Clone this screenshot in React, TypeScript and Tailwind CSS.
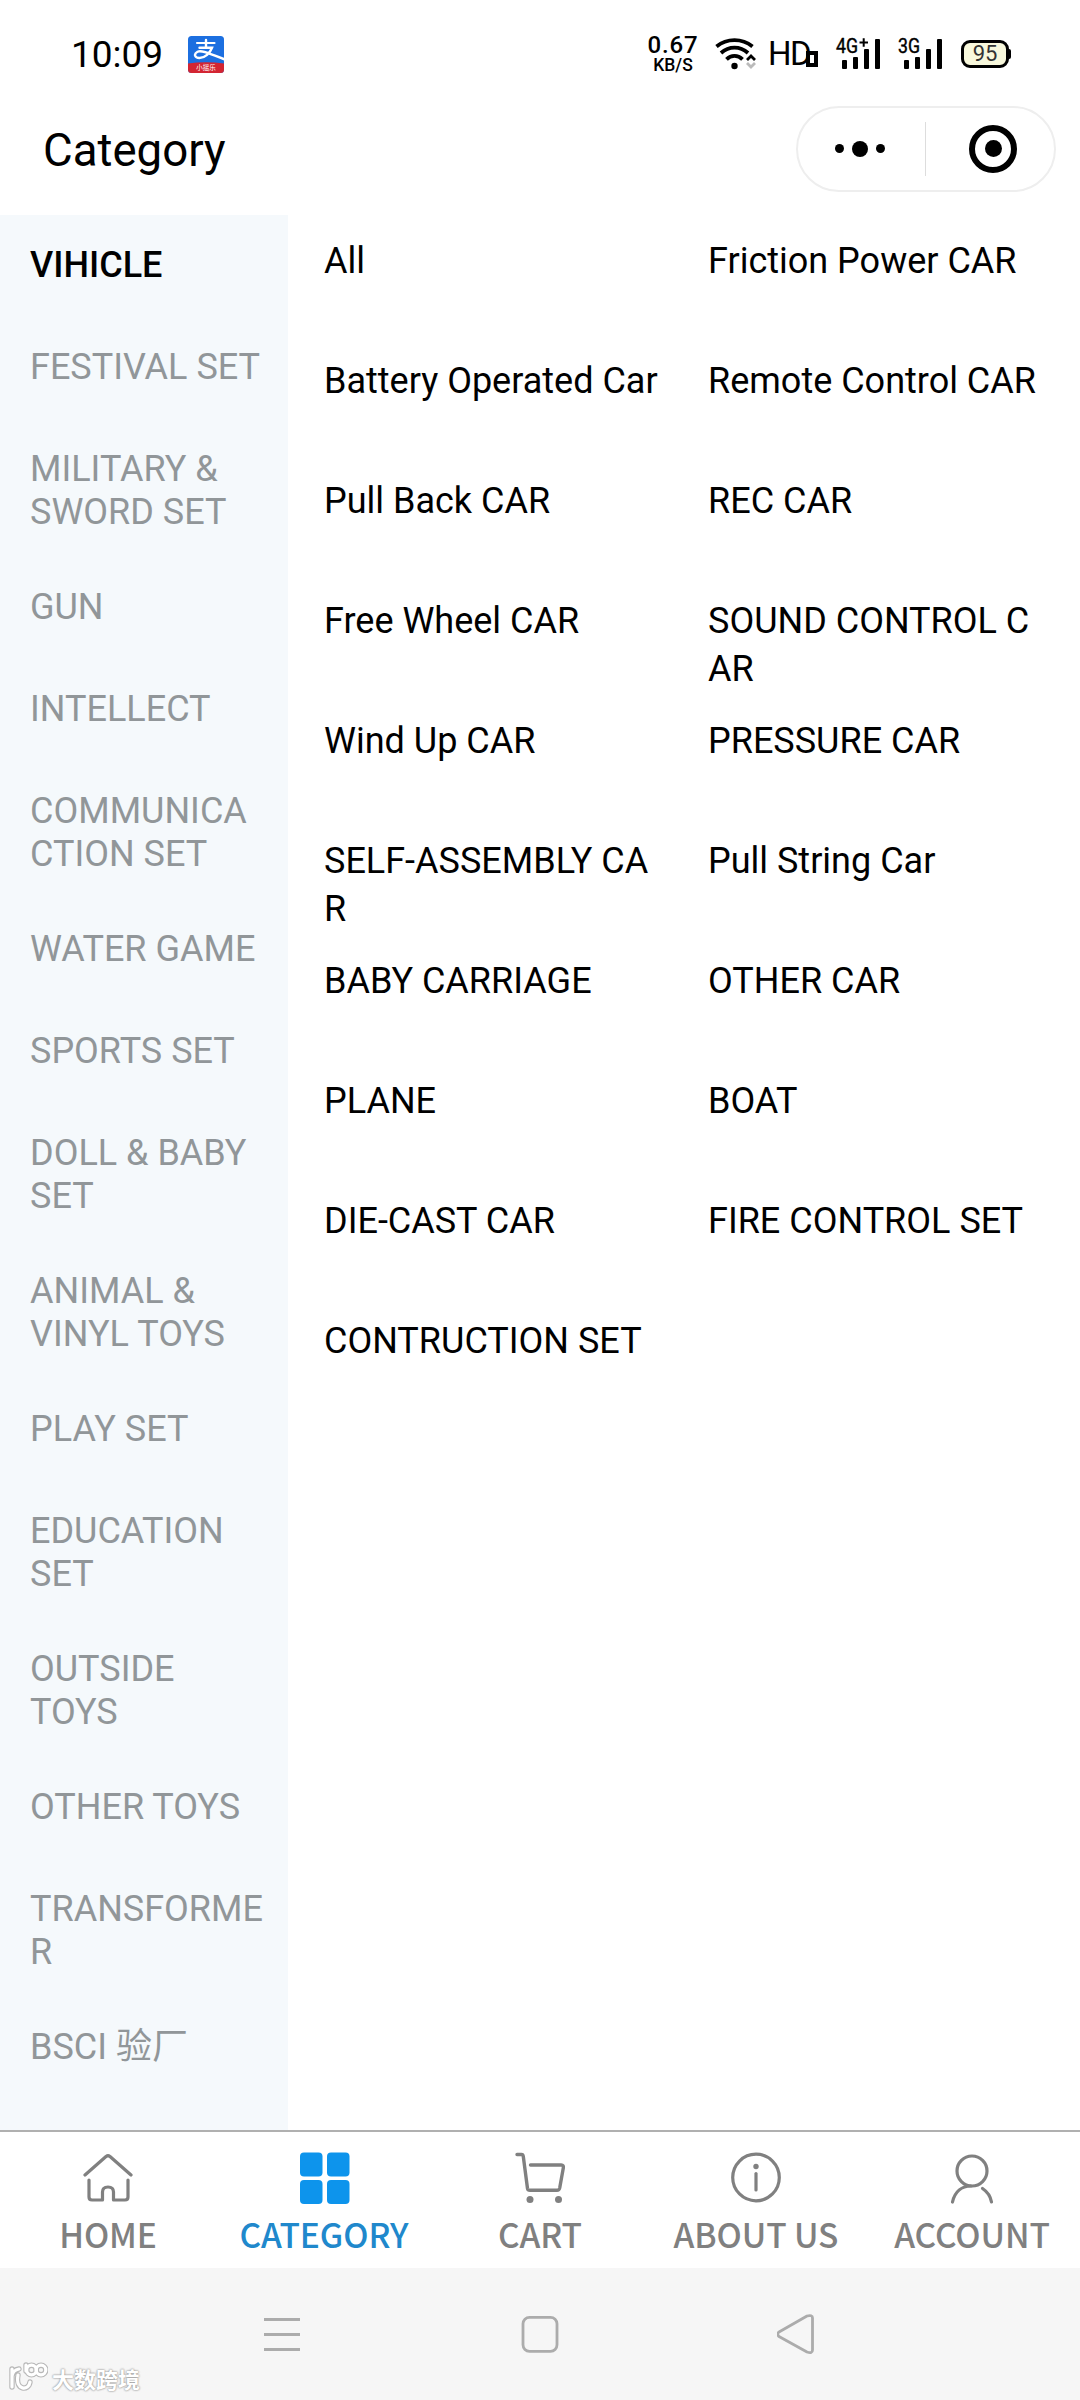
import type { ReactNode } from 'react'

const categories: string[][] = [
  ['VIHICLE'],
  ['FESTIVAL SET'],
  ['MILITARY &', 'SWORD SET'],
  ['GUN'],
  ['INTELLECT'],
  ['COMMUNICA', 'CTION SET'],
  ['WATER GAME'],
  ['SPORTS SET'],
  ['DOLL & BABY', 'SET'],
  ['ANIMAL &', 'VINYL TOYS'],
  ['PLAY SET'],
  ['EDUCATION', 'SET'],
  ['OUTSIDE', 'TOYS'],
  ['OTHER TOYS'],
  ['TRANSFORME', 'R'],
  ['BSCI 验厂'],
]

const subCategories = [
  'All', 'Friction Power CAR',
  'Battery Operated Car', 'Remote Control CAR',
  'Pull Back CAR', 'REC CAR',
  'Free Wheel CAR', 'SOUND CONTROL CAR',
  'Wind Up CAR', 'PRESSURE CAR',
  'SELF-ASSEMBLY CAR', 'Pull String Car',
  'BABY CARRIAGE', 'OTHER CAR',
  'PLANE', 'BOAT',
  'DIE-CAST CAR', 'FIRE CONTROL SET',
  'CONTRUCTION SET',
]

function AppBadge() {
  return (
    <svg width="36" height="37" viewBox="0 0 36 37">
      <clipPath id="badge"><rect width="36" height="37" rx="3.5" /></clipPath>
      <g clipPath="url(#badge)">
        <rect width="36" height="37" fill="#1c6fe0" />
        <path d="M0 27.5Q18 25 36 27.5V37H0Z" fill="#d32532" />
        <g fill="none" stroke="#fff" strokeLinecap="round">
          <path d="M9 7H26.5" strokeWidth="2.2" />
          <path d="M18 4V11.5" strokeWidth="2.4" />
          <path d="M11.5 11.8H24C22 17 17 22 11.5 22C6.5 22 5.5 18 9.5 15.8C14 13.5 23 18.5 37 23.5" strokeWidth="2.4" />
        </g>
        <text x="18" y="34.4" textAnchor="middle" fontSize="6.5" fill="#fff" fontFamily="Noto Sans CJK SC, sans-serif">小摇乐</text>
      </g>
    </svg>
  )
}

function WifiIcon() {
  return (
    <svg width="42" height="34" viewBox="0 0 42 34" fill="none" stroke="#000" strokeWidth="3.8">
      <path d="M1.5 9.5C12 1 27 1 37.5 9.5" />
      <path d="M6 16C14 8.8 25 8.8 33 16" />
      <path d="M11.5 22.3C16 17.8 23 17.8 27.5 22.3" />
      <circle cx="19.5" cy="29" r="3.2" fill="#000" stroke="none" />
      <path d="M32 23L36 19L40 23" strokeWidth="2.8" />
      <path d="M32 26L36 30L40 26" stroke="#bbb" strokeWidth="2.8" />
    </svg>
  )
}

function SignalIcon({ label, plus }: { label: string; plus?: boolean }) {
  return (
    <svg width="46" height="34" viewBox="0 0 46 34" overflow="visible">
      <g fill="#000">
        <rect x="7" y="23" width="5" height="9" rx="1" />
        <rect x="18" y="20" width="5" height="12" rx="1" />
        <rect x="29" y="12" width="5" height="20" rx="1" />
        <rect x="40" y="2" width="5" height="30" rx="1" />
      </g>
      {plus && <path d="M24.5 5.5H33M28.7 1.3V9.8" stroke="#000" strokeWidth="2" />}
      <text x="1" y="16.4" fontSize="19.5" fill="#000" stroke="#000" strokeWidth="0.4" textLength="22" lengthAdjust="spacingAndGlyphs" fontFamily="Roboto, sans-serif">{label}</text>
    </svg>
  )
}

function HomeIcon() {
  return (
    <svg width="50" height="54" viewBox="0 0 50 54" fill="none" stroke="#808080" strokeWidth="3.2" strokeLinecap="round" strokeLinejoin="round">
      <path d="M2 24L23 5.5Q25 4 27 5.5L48 24" />
      <path d="M6 29V46Q6 49 9 49H19.5V41Q19.5 36 25 36Q30.5 36 30.5 41V49H42Q45 49 45 46V29" />
    </svg>
  )
}

function CategoryIcon() {
  return (
    <svg className="ml-[2px]" width="50" height="54" viewBox="0 0 50 54" fill="#0d94ec">
      <rect x="0" y="1.5" width="22.5" height="24" rx="4" />
      <rect x="27" y="1.5" width="22.5" height="24" rx="4" />
      <rect x="0" y="29" width="22.5" height="24" rx="4" />
      <rect x="27" y="29" width="22.5" height="24" rx="4" />
    </svg>
  )
}

function CartIcon() {
  return (
    <svg width="50" height="54" viewBox="0 0 50 54" fill="none" stroke="#808080" strokeWidth="3.4" strokeLinecap="round" strokeLinejoin="round">
      <path d="M2 3.5H6.5Q8 3.5 8.300 5.5L12.5 37.5Q12.8 39.3 15 39.3H42Q44.2 39.3 44.7 37L48.3 17Q48.8 14 46.3 14H15.5" />
      <circle cx="15" cy="48.5" r="3.5" fill="#808080" stroke="none" />
      <circle cx="43.5" cy="48.5" r="3.5" fill="#808080" stroke="none" />
    </svg>
  )
}

function InfoIcon() {
  return (
    <svg width="50" height="54" viewBox="0 0 50 54" fill="none" stroke="#808080" strokeWidth="3.2" strokeLinecap="round">
      <circle cx="25" cy="26.5" r="23.3" />
      <circle cx="25" cy="15.5" r="2.7" fill="#808080" stroke="none" />
      <path d="M25 22.5V39" />
    </svg>
  )
}

function AccountIcon() {
  return (
    <svg width="50" height="54" viewBox="0 0 50 54" fill="none" stroke="#808080" strokeWidth="3.2" strokeLinecap="round">
      <circle cx="25" cy="20" r="15" />
      <path d="M5.5 51C8 40.5 15 35 24 35" />
      <path d="M35.5 37.5C40 40.5 43.5 45 44.5 51" />
    </svg>
  )
}

const tabs: { label: string; icon: ReactNode; active?: boolean }[] = [
  { label: 'HOME', icon: <HomeIcon /> },
  { label: 'CATEGORY', icon: <CategoryIcon />, active: true },
  { label: 'CART', icon: <CartIcon /> },
  { label: 'ABOUT US', icon: <InfoIcon /> },
  { label: 'ACCOUNT', icon: <AccountIcon /> },
]

export default function App() {
  return (
    <div className="flex h-[2400px] w-[1080px] flex-col overflow-hidden bg-white font-['Roboto','Noto_Sans_CJK_SC',sans-serif] text-black">
      {/* Status bar */}
      <header className="flex h-[102px] shrink-0 items-center pt-[6px] pr-[69px] pl-[71px]">
        <span className="w-[117px] text-[37px] leading-none">10:09</span>
        <AppBadge />
        <div className="ml-auto flex items-center">
          <div className="flex w-[50px] flex-col items-center font-medium">
            <span className="text-[24px] leading-[22px] tracking-[0.8px]">0.67</span>
            <span className="text-[17.5px] leading-[18px]">KB/S</span>
          </div>
          <div className="ml-[17px]"><WifiIcon /></div>
          <div className="ml-[11px] flex items-end">
            <span className="w-[38px] text-[33px] leading-[30px] tracking-[-1.5px]">HD</span>
            <span className="mb-[2px] h-[16px] w-[12px] border-4 border-black" />
          </div>
          <div className="ml-[17px]"><SignalIcon label="4G" plus /></div>
          <div className="ml-[16px]"><SignalIcon label="3G" /></div>
          <div className="ml-[18px] flex items-center">
            <span className="flex h-[28px] w-[48px] items-center justify-center rounded-[9px] border-[3px] border-black bg-[#f8f8dc] text-[22px] leading-none text-[#333]">95</span>
            <span className="h-[10px] w-[2px] rounded-r bg-black" />
          </div>
        </div>
      </header>

      {/* Title bar */}
      <div className="flex h-[113px] shrink-0 items-center justify-between pr-[24px] pb-[20px] pl-[43px]">
        <h1 className="pt-[4px] text-[45.6px] leading-none">Category</h1>
        <div className="flex h-[86px] w-[260px] items-center rounded-full border-2 border-[#eeeeee]">
          <div className="flex w-[127px] items-center justify-center gap-[8px] pr-[3px]">
            <span className="size-[9px] rounded-full bg-black" />
            <span className="size-[16px] rounded-full bg-black" />
            <span className="size-[9px] rounded-full bg-black" />
          </div>
          <span className="h-[54px] w-px bg-[#dddddd]" />
          <div className="flex flex-1 items-center justify-center pl-[6px]">
            <span className="flex size-[48px] items-center justify-center rounded-full border-[6px] border-black">
              <span className="size-[17px] rounded-full bg-black" />
            </span>
          </div>
        </div>
      </div>

      <main className="flex h-[1915px] shrink-0">
        {/* Sidebar */}
        <nav className="w-[288px] shrink-0 bg-[#f5f9fc] pt-[5px] pl-[30px]">
          {categories.map((lines, i) => (
            <div
              key={lines[0]}
              className={`min-h-[102px] pt-[24px] pb-[28px] text-[36px] leading-[43px] whitespace-nowrap ${i === 0 ? 'font-medium text-black' : 'text-[#919699]'}`}
            >
              {lines.map((line) => <div key={line}>{line}</div>)}
            </div>
          ))}
        </nav>

        {/* Sub categories */}
        <section className="grid flex-1 auto-rows-[120px] grid-cols-[384px_336px] content-start pt-[22px] pl-[36px]">
          {subCategories.map((name) => (
            <div key={name} className="w-[338px] text-[36px] leading-[48px] break-all">{name}</div>
          ))}
        </section>
      </main>

      {/* Tab bar */}
      <nav className="grid h-[138px] shrink-0 grid-cols-5 border-t-2 border-[#b0b0b0] font-['Noto_Sans_CJK_SC',sans-serif]">
        {tabs.map((tab) => (
          <div key={tab.label} className={`flex flex-col items-center pt-[19px] ${tab.active ? 'text-[#2088cc]' : 'text-[#808080]'}`}>
            {tab.icon}
            <span className="mt-[4px] text-[33.5px] leading-[50px] font-medium tracking-[-0.1px] whitespace-nowrap">{tab.label}</span>
          </div>
        ))}
      </nav>

      {/* System navigation */}
      <footer className="relative flex h-[132px] shrink-0 items-start bg-[#f6f6f6] pt-[44px] pl-[262px]">
        <svg width="40" height="44" viewBox="0 0 40 44" stroke="#acacac" strokeWidth="2.8">
          <path d="M2 7.5H38M2 22.5H38M2 37.5H38" />
        </svg>
        <svg className="ml-[218px]" width="40" height="44" viewBox="0 0 40 44" fill="none" stroke="#acacac" strokeWidth="2.8">
          <rect x="3" y="5.3" width="34" height="34" rx="6.5" />
        </svg>
        <svg className="ml-[217px]" width="40" height="44" viewBox="0 0 40 44" fill="none" stroke="#acacac" strokeWidth="2.8" strokeLinejoin="round">
          <path d="M2 20L30 4Q35.5 2.5 35.5 6V38Q35.5 42 30 40L2 24.5Q-0.500 22 2 20Z" />
        </svg>
        <div className="absolute bottom-[9px] left-[8px] flex items-end gap-[4px]">
          <svg width="40" height="30" viewBox="0 0 40 30" fill="none" strokeLinecap="round">
            <g stroke="#b8b8b8" strokeWidth="5.4">
              <path d="M4 8V26M4 15Q5 9 11 8M10 14C7 30 21 30 22 21M18 4V10" />
              <circle cx="23.5" cy="9" r="4.8" />
              <circle cx="33" cy="9" r="4.8" />
            </g>
            <g stroke="#fff" strokeWidth="3.2">
              <path d="M4 8V26M4 15Q5 9 11 8M10 14C7 30 21 30 22 21M18 4V10" />
              <circle cx="23.5" cy="9" r="4.8" />
              <circle cx="33" cy="9" r="4.8" />
            </g>
          </svg>
          <span className="font-['Noto_Sans_CJK_SC',sans-serif] text-[22px] leading-[26px] font-bold text-white [text-shadow:0_0_2px_#999,0_0_2px_#999]">大数跨境</span>
        </div>
      </footer>
    </div>
  )
}
